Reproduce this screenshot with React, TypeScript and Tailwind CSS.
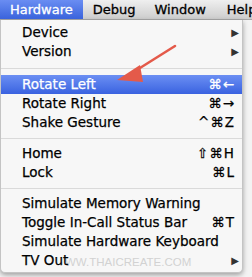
import React from "react";

type Item =
  | { kind: "sep"; h: string }
  | { kind: "item"; label: string; sc?: string; sub?: boolean; active?: boolean };

const items: Item[] = [
  { kind: "item", label: "Device", sub: true },
  { kind: "item", label: "Version", sub: true },
  { kind: "sep", h: "h-[14px]" },
  { kind: "item", label: "Rotate Left", sc: "⌘←", active: true },
  { kind: "item", label: "Rotate Right", sc: "⌘→" },
  { kind: "item", label: "Shake Gesture", sc: "^⌘Z" },
  { kind: "sep", h: "h-[12px]" },
  { kind: "item", label: "Home", sc: "⇧⌘H" },
  { kind: "item", label: "Lock", sc: "⌘L" },
  { kind: "sep", h: "h-[12px]" },
  { kind: "item", label: "Simulate Memory Warning" },
  { kind: "item", label: "Toggle In-Call Status Bar", sc: "⌘T" },
  { kind: "item", label: "Simulate Hardware Keyboard" },
  { kind: "item", label: "TV Out", sub: true },
];

export default function App() {
  return (
    <div
      className="relative w-[252px] h-[277px] overflow-hidden bg-[#f3f3f3]"
      style={{ fontFamily: '"DejaVu Sans", "Liberation Sans", sans-serif' }}
    >
      <div className="flex h-[20px] items-stretch bg-gradient-to-b from-[#efefef] to-[#cdcdcd] border-b border-[#a8a8a8] text-[13px] leading-[20px] text-black whitespace-nowrap [-webkit-text-stroke:0.3px]">
        <div className="shrink-0 pl-[10px] pr-[10px] bg-gradient-to-b from-[#6a8df2] to-[#3a63dc] text-white">Hardware</div>
        <div className="shrink-0 pl-[10px] pr-[9px]">Debug</div>
        <div className="shrink-0 pl-[10px] pr-[10px]">Window</div>
        <div className="shrink-0 pl-[11px]">Help</div>
      </div>
      <div className="w-[243px] bg-[#f7f7f7] border-l border-r border-b border-[#c4c4c4] rounded-b-[5px] shadow-[0_2px_5px_rgba(0,0,0,0.35)] pt-[3px] pb-[2px] text-[13.5px] text-black">
        {items.map((it, i) =>
          it.kind === "sep" ? (
            <div key={i} className={it.h + " flex items-center"}>
              <div className="h-px w-full bg-[#dadada]" />
            </div>
          ) : (
            <div
              key={i}
              className={
                "relative h-[19px] flex items-center justify-between pl-[21px] pr-[7px] " +
                (it.active ? "bg-gradient-to-b from-[#6c8ff3] to-[#3a62e0] text-white" : "")
              }
            >
              {it.label === "TV Out" ? (
                <span
                  className="absolute left-[64px] top-[3px] text-[11.5px] text-[#d2d2d2]"
                  style={{ fontFamily: '"Liberation Sans", Arial, sans-serif' }}
                >
                  WW.THAICREATE.COM
                </span>
              ) : null}
              <span className="relative leading-[19px] [-webkit-text-stroke:0.25px]">{it.label}</span>
              {it.sc ? (
                <span
                  className="leading-[19px] tracking-[1px] [-webkit-text-stroke:0.25px]"
                  style={{ fontFamily: '"DejaVu Sans", sans-serif' }}
                >
                  {it.sc}
                </span>
              ) : it.sub ? (
                <span className="text-[10px] text-[#333] -mr-[4px]">▶</span>
              ) : null}
            </div>
          )
        )}
      </div>
      <svg className="absolute left-0 top-0" width="252" height="277" viewBox="0 0 252 277">
        <line x1="175" y1="46" x2="132" y2="73" stroke="#e45a4a" strokeWidth="2.6" strokeLinecap="round" />
        <polygon points="117,80 140,65 143,82" fill="#e45a4a" />
      </svg>
    </div>
  );
}
